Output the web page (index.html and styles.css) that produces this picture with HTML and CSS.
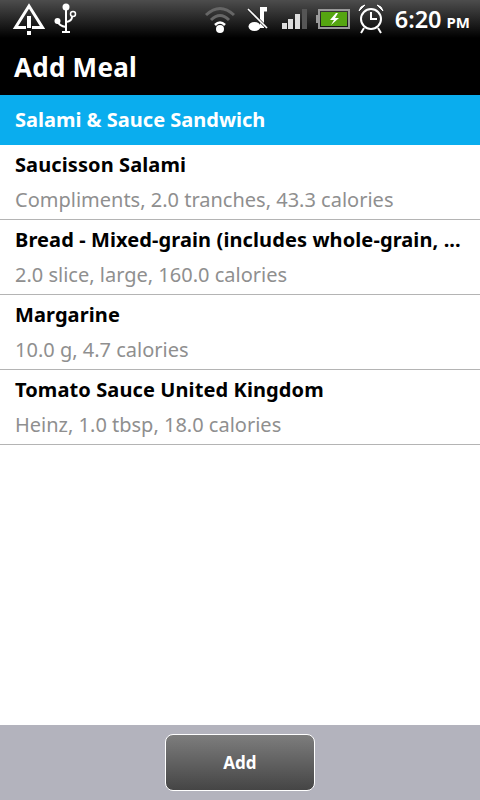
FILE: index.html
```html
<!DOCTYPE html>
<html lang="en">
<head>
    <meta charset="UTF-8">
    <title>Add Meal</title>
    <link rel="stylesheet" href="styles.css">
</head>
<body>
    <div class="status-bar">
        <div class="status-left">
            <svg class="icon-alert" width="34" height="36" viewBox="0 0 34 36">
                <path d="M14 26.5 H3.5 L17 5 L30.5 26.5 H20" fill="none" stroke="#fff" stroke-width="3"/>
                <rect x="15" y="15" width="4" height="12" fill="#fff"/>
                <rect x="15" y="30" width="4" height="4" fill="#fff"/>
            </svg>
            <svg class="icon-usb" width="26" height="34" viewBox="0 0 26 34">
                <circle cx="12" cy="5" r="3.5" fill="#fff"/>
                <path d="M12 5 V29 M8 30 H16" fill="none" stroke="#fff" stroke-width="2"/>
                <circle cx="3.5" cy="19" r="3" fill="#fff"/>
                <path d="M3.5 19 Q5 24 12 25" fill="none" stroke="#fff" stroke-width="2"/>
                <circle cx="19" cy="12" r="2.5" fill="none" stroke="#fff" stroke-width="1.5"/>
                <path d="M18 15 Q18 19 12 20" fill="none" stroke="#fff" stroke-width="2"/>
            </svg>
        </div>
        <div class="status-right">
            <svg class="icon-wifi" width="32" height="32" viewBox="0 0 32 32">
                <path d="M2 12 Q16 -1 30 12" fill="none" stroke="#666" stroke-width="3"/>
                <path d="M7 17 Q16 8 25 17" fill="none" stroke="#666" stroke-width="3"/>
                <path d="M11 22 Q16 17 21 22" fill="none" stroke="#fff" stroke-width="2.5"/>
                <circle cx="16" cy="26" r="4" fill="#fff"/>
            </svg>
            <svg class="icon-mute" width="28" height="26" viewBox="0 0 28 26">
                <path d="M13 22 V1 H20 V5.5 H17 V22 Z" fill="#fff"/>
                <ellipse cx="7.5" cy="20.5" rx="6" ry="4.5" fill="#fff"/>
                <path d="M1 3 L20 22" stroke="#222" stroke-width="3"/>
                <path d="M1 3 L20 22" stroke="#fff" stroke-width="1.6"/>
            </svg>
            <svg class="icon-signal" width="25" height="20" viewBox="0 0 25 20">
                <rect x="0" y="14" width="5" height="6" fill="#ddd"/>
                <rect x="6" y="10" width="5" height="10" fill="#ddd"/>
                <rect x="13" y="5" width="5" height="15" fill="#ddd"/>
                <rect x="20" y="0" width="5" height="20" fill="#555"/>
            </svg>
            <svg class="icon-battery" width="34" height="20" viewBox="0 0 34 20">
                <rect x="3" y="1" width="30" height="18" fill="none" stroke="#999" stroke-width="2"/>
                <rect x="0" y="6" width="3" height="8" fill="#999"/>
                <rect x="5" y="3" width="26" height="14" fill="#55a511"/>
                <path d="M20 4 L14 11 H18 L15 16 L23 9 H19 L22 4 Z" fill="#fff"/>
            </svg>
            <svg class="icon-alarm" width="26" height="30" viewBox="0 0 26 30">
                <circle cx="13" cy="15" r="10" fill="none" stroke="#fff" stroke-width="2"/>
                <path d="M13 8 V15 H19" fill="none" stroke="#fff" stroke-width="2"/>
                <path d="M1 7 Q2 2 7 1 Z M25 7 Q24 2 19 1 Z" fill="#fff" stroke="#fff"/>
                <path d="M6 24 L3 29 M20 24 L23 29" stroke="#fff" stroke-width="2"/>
            </svg>
            <div class="clock">6:20<span class="ampm">PM</span></div>
        </div>
    </div>

    <div class="title-bar">Add Meal</div>
    <div class="meal-name">Salami &amp; Sauce Sandwich</div>

    <ul class="food-list">
        <li class="food-item">
            <div class="food-title">Saucisson Salami</div>
            <div class="food-detail">Compliments, 2.0 tranches, 43.3 calories</div>
        </li>
        <li class="food-item">
            <div class="food-title">Bread - Mixed-grain (includes whole-grain, ...</div>
            <div class="food-detail">2.0 slice, large, 160.0 calories</div>
        </li>
        <li class="food-item">
            <div class="food-title">Margarine</div>
            <div class="food-detail">10.0 g, 4.7 calories</div>
        </li>
        <li class="food-item">
            <div class="food-title">Tomato Sauce United Kingdom</div>
            <div class="food-detail">Heinz, 1.0 tbsp, 18.0 calories</div>
        </li>
    </ul>

    <div class="footer">
        <button class="add-button" type="button">Add</button>
    </div>
</body>
</html>
```

FILE: styles.css
```css
* {
    box-sizing: border-box;
}
html, body {
    height: 100%;
}
body {
    margin: 0;
    display: flex;
    flex-direction: column;
    font-family: "Noto Sans", "Open Sans", sans-serif;
    background-color: #fff;
    overflow: hidden;
}

/* Status bar */
.status-bar {
    height: 38px;
    flex: none;
    display: flex;
    justify-content: space-between;
    align-items: center;
    background: linear-gradient(#4d4d4d, #000);
    color: #fff;
}
.status-left,
.status-right {
    display: flex;
    align-items: center;
}
.status-left {
    padding-left: 12px;
}
.icon-usb {
    margin-left: 8px;
}
.icon-wifi {
    margin-right: 11px;
}
.icon-mute {
    margin-right: 7px;
}
.icon-signal {
    margin-right: 9px;
}
.icon-battery {
    margin-right: 8px;
}
.icon-alarm {
    margin-right: 11px;
}
.clock {
    font-size: 23.5px;
    font-weight: 600;
    padding-right: 10px;
    white-space: nowrap;
}
.ampm {
    font-size: 15px;
    font-weight: 700;
    margin-left: 5px;
}

/* Title */
.title-bar {
    height: 57px;
    flex: none;
    padding-left: 14px;
    background-color: #000;
    color: #fff;
    font-size: 26px;
    font-weight: 700;
    letter-spacing: 0.25px;
    line-height: 59px;
}
.meal-name {
    height: 50px;
    flex: none;
    padding-left: 15px;
    background-color: #0aadee;
    color: #fff;
    font-size: 20px;
    font-weight: 700;
    line-height: 50px;
}

/* List */
.food-list {
    flex: 1;
    margin: 0;
    padding: 0;
    list-style: none;
}
.food-item {
    height: 75px;
    padding: 6px 15px 0;
    border-bottom: 1px solid #b4b4b4;
}
.food-title {
    color: #000;
    font-size: 20px;
    font-weight: 700;
    letter-spacing: 0.1px;
    line-height: 28px;
    white-space: nowrap;
}
.food-detail {
    margin-top: 7px;
    color: #8f8f8f;
    font-size: 20px;
    line-height: 28px;
    white-space: nowrap;
}

/* Footer */
.footer {
    height: 75px;
    flex: none;
    display: flex;
    justify-content: center;
    padding-top: 9px;
    background-color: #b3b3bd;
}
.add-button {
    width: 150px;
    height: 57px;
    border: 1px solid #fff;
    border-radius: 8px;
    background: linear-gradient(#7d7d7d, #454545);
    color: #fff;
    font-family: inherit;
    font-size: 17px;
    font-weight: 700;
}
```
